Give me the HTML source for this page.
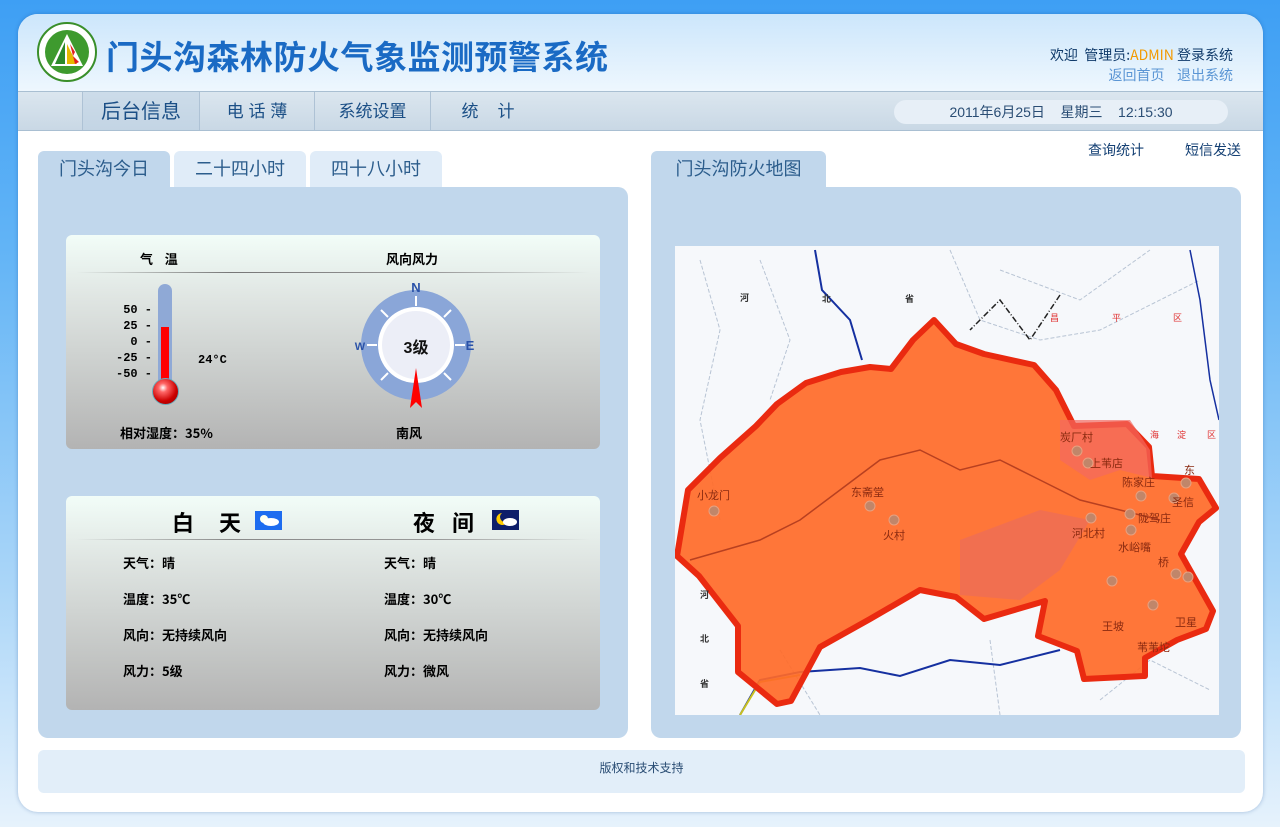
<!DOCTYPE html>
<html><head><meta charset="utf-8"><style>
*{margin:0;padding:0;box-sizing:border-box}
body{width:1280px;height:827px;overflow:hidden;background:linear-gradient(180deg,#3e9ff4 0%,#62b4f6 30%,#a9d5f8 70%,#e6f2fc 100%);font-family:"Liberation Sans","Noto Sans CJK SC",sans-serif;position:relative}
.card{position:absolute;left:18px;top:14px;width:1245px;height:798px;background:#fff;border-radius:20px;overflow:hidden;box-shadow:0 0 4px rgba(0,60,140,.3)}
.hdr{position:absolute;left:0;top:0;width:100%;height:77px;background:linear-gradient(180deg,#cce6fb,#eef7fe)}
.title{position:absolute;left:88px;top:17px;font-size:33px;font-weight:bold;color:#1a6ac4;letter-spacing:0.5px;font-family:"Noto Sans CJK SC",sans-serif}
.nav{position:absolute;left:0;top:77px;width:100%;height:40px;background:linear-gradient(180deg,#dbe6ef,#c9d8e5);border-top:1px solid #a9bfd2;border-bottom:1px solid #a9bfd2}
.nav div{position:absolute;top:0;height:38px;line-height:40px;text-align:center;color:#1b4f86;font-size:17px;border-left:1px solid #aec2d5}
.tab{position:absolute;height:36px;line-height:36px;text-align:center;font-size:18px;color:#2c5d8c;background:#e0ecf8;border-radius:6px 6px 0 0}
.panel{position:absolute;background:#c1d7ec;border-radius:10px}
.box{position:absolute;left:66px;width:534px;height:214px;border-radius:6px;background:linear-gradient(180deg,#f2fdf8 0%,#dfe5e2 30%,#b3b3b3 100%);font-family:"Noto Sans CJK SC",sans-serif;font-weight:bold;color:#000}
.t{position:absolute;font-size:13px}
</style></head><body>
<div class="card">
 <div class="hdr">
  <svg style="position:absolute;left:19px;top:8px" width="60" height="60" viewBox="0 0 60 60">
   <circle cx="30" cy="30" r="29" fill="#fff" stroke="#3a8f2a" stroke-width="2"/>
   <circle cx="30" cy="30" r="22" fill="#3e9a2e"/>
   <path d="M30 12 L46 44 L14 44Z" fill="#fff"/>
   <path d="M28 20 L18 42 L28 42Z" fill="#2d8a2a"/>
   <path d="M30 22 L30 42 L40 42Z" fill="#e6b800"/>
   <path d="M33 22 L38 30 L36 34 L42 40 L38 42Z" fill="#e02020"/>
  </svg>
  <div class="title">门头沟森林防火气象监测预警系统</div>
  <div style="position:absolute;right:30px;top:31px;font-size:14px;color:#0f3a6a;text-align:right;font-family:'Noto Sans CJK SC',sans-serif">欢迎&nbsp; 管理员:<span style="color:#f29a00">ADMIN</span> 登录系统<br><span style="color:#5a95d4">返回首页&nbsp;&nbsp;&nbsp; 退出系统</span></div>
 </div>
 <div class="nav">
  <div style="left:64px;width:117px;font-size:20px;background:rgba(190,210,228,.5)">后台信息</div>
  <div style="left:181px;width:115px">电 话 薄</div>
  <div style="left:296px;width:116px">系统设置</div>
  <div style="left:412px;width:115px">统&nbsp;&nbsp;&nbsp; 计</div>
  <div style="left:876px;top:8px;width:334px;height:24px;line-height:24px;border:none;border-radius:12px;background:#e7eff7;font-size:14px;color:#2a4d74">2011年6月25日&nbsp;&nbsp;&nbsp; 星期三&nbsp;&nbsp;&nbsp; 12:15:30</div>
 </div>
 <div style="position:absolute;left:1070px;top:126px;font-size:14px;color:#133f73;font-family:'Noto Sans CJK SC',sans-serif">查询统计</div>
 <div style="position:absolute;left:1167px;top:126px;font-size:14px;color:#133f73;font-family:'Noto Sans CJK SC',sans-serif">短信发送</div>
</div>
<div class="tab" style="left:38px;top:151px;width:132px;background:#c1d7ec">门头沟今日</div>
<div class="tab" style="left:174px;top:151px;width:132px">二十四小时</div>
<div class="tab" style="left:310px;top:151px;width:132px">四十八小时</div>
<div class="panel" style="left:38px;top:187px;width:590px;height:551px;border-top-left-radius:0"></div>
<div class="tab" style="left:651px;top:151px;width:175px;background:#c1d7ec">门头沟防火地图</div>
<div class="panel" style="left:651px;top:187px;width:590px;height:551px;border-top-left-radius:0"></div>
<div style="position:absolute;left:38px;top:750px;width:1207px;height:43px;background:#e2eef9;border-radius:6px;text-align:center;line-height:36px;font-size:12px;color:#2a4d74">版权和技术支持</div>

<div class="box" style="top:235px">
 <div class="t" style="left:74px;top:14px">气&nbsp;&nbsp;&nbsp; 温</div>
 <div class="t" style="left:320px;top:14px">风向风力</div>
 <div style="position:absolute;left:10px;right:10px;top:37px;height:1px;background:linear-gradient(90deg,transparent,#777 30%,#999 70%,transparent)"></div>
 <div style="position:absolute;left:92px;top:49px;width:14px;height:110px;background:#8fa9d6;border-radius:7px"></div>
 <div style="position:absolute;left:95px;top:92px;width:8px;height:60px;background:#f00"></div>
 <div style="position:absolute;left:86px;top:143px;width:27px;height:27px;border-radius:50%;background:radial-gradient(circle at 40% 35%,#fff 0,#f66 20%,#c00 60%,#800 100%);border:1px solid #6ab"></div>
 <div class="t" style="left:50px;top:67px;line-height:16px;text-align:right;width:36px;font-family:'Liberation Mono',monospace;font-size:12px">50 -<br>25 -<br>0 -<br>-25 -<br>-50 -</div>
 <div class="t" style="left:132px;top:118px;font-family:'Liberation Mono',monospace;font-size:12px">24°C</div>
 <div class="t" style="left:54px;top:188px">相对湿度：35%</div>
 <svg style="position:absolute;left:288px;top:45px" width="124" height="135" viewBox="0 0 124 135">
  <circle cx="62" cy="65" r="55" fill="#8aa6d8"/>
  <circle cx="62" cy="65" r="38" fill="#fff"/>
  <circle cx="62" cy="65" r="34" fill="#eceef7"/>
  <g stroke="#fff" stroke-width="2">
   <line x1="62" y1="16" x2="62" y2="26"/><line x1="62" y1="104" x2="62" y2="114"/>
   <line x1="13" y1="65" x2="23" y2="65"/><line x1="101" y1="65" x2="111" y2="65"/>
   <line x1="27" y1="30" x2="34" y2="37"/><line x1="97" y1="30" x2="90" y2="37"/>
   <line x1="27" y1="100" x2="34" y2="93"/><line x1="97" y1="100" x2="90" y2="93"/>
  </g>
  <text x="62" y="12" text-anchor="middle" font-size="13" font-weight="bold" fill="#2a52a8" font-family="Liberation Sans">N</text>
  <text x="116" y="70" text-anchor="middle" font-size="13" font-weight="bold" fill="#2a52a8" font-family="Liberation Sans">E</text>
  <text x="6" y="70" text-anchor="middle" font-size="11" font-weight="bold" fill="#2a52a8" font-family="Liberation Sans">W</text>
  <text x="62" y="73" text-anchor="middle" font-size="16" fill="#111" font-family="Liberation Sans,Noto Sans CJK SC">3级</text>
  <path d="M62 88 L68 128 L62 122 L56 128Z" fill="#f00"/>
 </svg>
 <div class="t" style="left:330px;top:188px">南风</div>
</div>

<div class="box" style="top:496px">
 <div style="position:absolute;left:106px;top:10px;font-size:22px;letter-spacing:10px">白 天</div>
 <div style="position:absolute;left:189px;top:15px;width:27px;height:19px;background:#1e6cf0"><svg width="27" height="19"><circle cx="9" cy="8" r="4" fill="#ffe"/><ellipse cx="16" cy="11" rx="8" ry="4" fill="#fff"/></svg></div>
 <div style="position:absolute;left:347px;top:10px;font-size:22px;letter-spacing:6px">夜 间</div>
 <div style="position:absolute;left:426px;top:14px;width:27px;height:20px;background:#0d1e6a"><svg width="27" height="20"><path d="M10 3 A6 6 0 1 0 16 11 A5 5 0 1 1 10 3Z" fill="#ffcc00"/><ellipse cx="18" cy="12" rx="7" ry="4" fill="#fff"/></svg></div>
 <div style="position:absolute;left:10px;right:10px;top:43px;height:1px;background:linear-gradient(90deg,transparent,#888 30%,#999 70%,transparent)"></div>
 <div class="t" style="left:57px;top:49px;line-height:36px">天气：晴<br>温度：35℃<br>风向：无持续风向<br>风力：5级</div>
 <div class="t" style="left:318px;top:49px;line-height:36px">天气：晴<br>温度：30℃<br>风向：无持续风向<br>风力：微风</div>
</div>

<svg style="position:absolute;left:675px;top:246px" width="544" height="469" viewBox="675 246 544 469">
 <rect x="675" y="246" width="544" height="469" fill="#f6f8fb"/>
 <g fill="none" stroke="#b8c4d4" stroke-width="1" stroke-dasharray="4 2">
  <path d="M700 260 L720 330 L700 420 L720 520"/><path d="M760 260 L790 340 L770 400"/><path d="M950 250 L980 320 L1040 340 L1100 330 L1200 280"/><path d="M1000 270 L1080 300 L1150 250"/><path d="M780 650 L820 715"/><path d="M990 640 L1000 715"/><path d="M1100 700 L1150 660 L1210 690"/>
 </g>
 <path d="M815 250 L822 290 L850 320 L862 360" fill="none" stroke="#1530a0" stroke-width="2"/>
 <path d="M740 715 L760 680 L800 672 L860 668 L900 676 L950 660 L1000 665 L1060 650" fill="none" stroke="#1530a0" stroke-width="2"/>
 <path d="M740 715 L760 682 L800 675" fill="none" stroke="#c8c020" stroke-width="2"/>
 <path d="M1060 295 L1030 340 L1000 300 L970 330" fill="none" stroke="#222" stroke-width="1.5" stroke-dasharray="6 2 1 2"/>
 <path d="M1190 250 L1200 300 L1210 380 L1219 420" fill="none" stroke="#1530a0" stroke-width="1.5"/>
 <path d="M677 556 L688 490 L720 458 L756 426 L777 404 L806 383 L841 372 L870 367 L891 369 L913 340 L934 320 L956 344 L984 354 L1034 365 L1056 390 L1074 426 L1127 424 L1149 447 L1152 476 L1199 479 L1216 508 L1199 522 L1181 554 L1213 611 L1206 629 L1177 640 L1145 658 L1145 676 L1084 679 L1077 651 L1038 636 L1045 601 L984 619 L956 597 L920 590 L870 619 L820 647 L791 701 L777 704 L738 672 L738 626 L699 576Z" fill="#ff6a28" fill-opacity=".92" stroke="#ea2a10" stroke-width="6" stroke-linejoin="round"/>
 <path d="M1060 420 L1130 420 L1150 450 L1152 478 L1120 470 L1090 480 L1060 460Z" fill="#f46a60" fill-opacity=".7"/>
 <path d="M960 540 L1040 510 L1090 520 L1060 570 L1020 600 L960 595Z" fill="#e86a60" fill-opacity=".6"/>
 <path d="M690 560 L760 540 L800 520 L840 490 L880 460 L920 450 L960 470 L1000 460 L1040 480 L1080 500 L1120 510 L1160 520" fill="none" stroke="#b84020" stroke-width="1.5"/>
 <g fill="#c0866a" stroke="#e8a080" stroke-width="1"><circle cx="714" cy="511" r="5"/><circle cx="870" cy="506" r="5"/><circle cx="894" cy="520" r="5"/><circle cx="1077" cy="451" r="5"/><circle cx="1088" cy="463" r="5"/><circle cx="1141" cy="496" r="5"/><circle cx="1130" cy="514" r="5"/><circle cx="1091" cy="518" r="5"/><circle cx="1131" cy="530" r="5"/><circle cx="1112" cy="581" r="5"/><circle cx="1153" cy="605" r="5"/><circle cx="1186" cy="483" r="5"/><circle cx="1174" cy="498" r="5"/><circle cx="1176" cy="574" r="5"/><circle cx="1188" cy="577" r="5"/></g>
 <g font-size="11" fill="#8a2a10" font-family="Noto Sans CJK SC,sans-serif"><text x="697" y="499">小龙门</text><text x="851" y="496">东斋堂</text><text x="883" y="539">火村</text><text x="1060" y="441">炭厂村</text><text x="1090" y="467">上苇店</text><text x="1122" y="486">陈家庄</text><text x="1138" y="522">陇驾庄</text><text x="1072" y="537">河北村</text><text x="1118" y="551">水峪嘴</text><text x="1158" y="566">桥</text><text x="1175" y="626">卫星</text><text x="1102" y="630">王坡</text><text x="1172" y="506">圣信</text><text x="1184" y="474">东</text><text x="1137" y="651">苇苇坨</text></g>
 <g font-size="9" fill="#333" font-weight="bold" font-family="Noto Sans CJK SC,sans-serif"><text x="740" y="301">河</text><text x="822" y="302">北</text><text x="905" y="302">省</text><text x="700" y="598">河</text><text x="700" y="642">北</text><text x="700" y="687">省</text></g>
 <g font-size="9" fill="#e03030" font-family="Noto Sans CJK SC,sans-serif"><text x="1050" y="321">昌</text><text x="1112" y="321">平</text><text x="1173" y="321">区</text><text x="1150" y="438">海</text><text x="1177" y="438">淀</text><text x="1207" y="438">区</text><text x="842" y="740">房</text><text x="946" y="740">山</text><text x="1050" y="740">区</text></g>
</svg>
</body></html>
